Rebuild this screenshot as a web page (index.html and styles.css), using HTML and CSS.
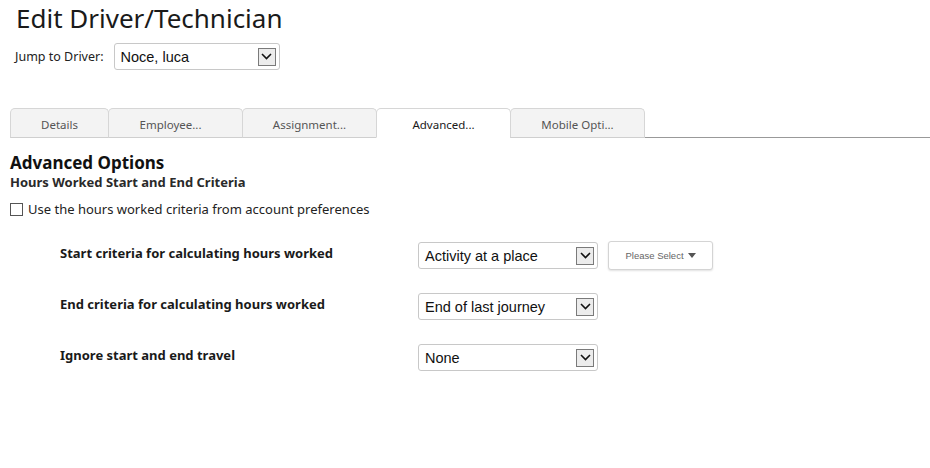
FILE: index.html
```html
<!DOCTYPE html>
<html>
<head>
<meta charset="utf-8">
<link rel="stylesheet" href="styles.css">
</head>
<body>
<h1 class="title">Edit Driver/Technician</h1>
<div class="jump">
  <span class="jump-label">Jump to Driver:</span>
  <div class="select select-jump"><span class="select-text">Noce, luca</span><span class="arrow"><svg width="11" height="7" viewBox="0 0 11 7"><path d="M1 1 L5.5 5.5 L10 1" fill="none" stroke="#111" stroke-width="1.6"/></svg></span></div>
</div>
<div class="tabs">
  <div class="tab">Details</div>
  <div class="tab tab-emp">Employee...</div>
  <div class="tab">Assignment...</div>
  <div class="tab active">Advanced...</div>
  <div class="tab">Mobile Opti...</div>
  <div class="tab-rest"></div>
</div>
<h2 class="section">Advanced Options</h2>
<h3 class="subsection">Hours Worked Start and End Criteria</h3>
<label class="check"><span class="box"></span>Use the hours worked criteria from account preferences</label>
<div class="rows">
  <div class="row">
    <span class="row-label">Start criteria for calculating hours worked</span>
    <div class="select select-row"><span class="select-text">Activity at a place</span><span class="arrow"><svg width="11" height="7" viewBox="0 0 11 7"><path d="M1 1 L5.5 5.5 L10 1" fill="none" stroke="#111" stroke-width="1.6"/></svg></span></div>
    <div class="btn">Please Select <span class="caret"></span></div>
  </div>
  <div class="row">
    <span class="row-label">End criteria for calculating hours worked</span>
    <div class="select select-row"><span class="select-text">End of last journey</span><span class="arrow"><svg width="11" height="7" viewBox="0 0 11 7"><path d="M1 1 L5.5 5.5 L10 1" fill="none" stroke="#111" stroke-width="1.6"/></svg></span></div>
  </div>
  <div class="row">
    <span class="row-label">Ignore start and end travel</span>
    <div class="select select-row"><span class="select-text">None</span><span class="arrow"><svg width="11" height="7" viewBox="0 0 11 7"><path d="M1 1 L5.5 5.5 L10 1" fill="none" stroke="#111" stroke-width="1.6"/></svg></span></div>
  </div>
</div>
</body>
</html>
```
FILE: styles.css
```css
* { box-sizing: border-box; }
body {
  margin: 0;
  padding: 0 0 0 10px;
  font-family: "Noto Sans", "Open Sans", sans-serif;
  color: #222;
  background: #fff;
}
.title {
  margin: 0 0 0 6px;
  font-size: 26px;
  font-weight: 400;
  line-height: normal;
  color: #1a1a1a;
}
.jump {
  display: flex;
  align-items: center;
  margin: 7px 0 0 5px;
  height: 27px;
}
.jump-label {
  font-size: 12.5px;
  margin-right: 10px;
  color: #222;
}
.select {
  display: flex;
  align-items: center;
  justify-content: space-between;
  border: 1px solid #c8c8c8;
  border-radius: 3px;
  height: 27px;
  padding: 0 3px 0 6px;
  font-family: "Liberation Sans", Arial, sans-serif;
  font-size: 14.5px;
  color: #111;
  background: #fff;
}
.select-jump { width: 166px; }
.select-row { width: 180px; }
.arrow {
  display: flex;
  align-items: center;
  justify-content: center;
  width: 18px;
  height: 18px;
  border: 1px solid #7a7a7a;
  background: #ececec;
}
.tabs {
  display: flex;
  margin-top: 38px;
  height: 30px;
  align-items: flex-end;
}
.tab {
  height: 30px;
  width: 135px;
  border: 1px solid #d6d6d6;
  border-bottom: 1px solid #cfcfcf;
  border-radius: 5px 5px 0 0;
  background: #f3f3f3;
  font-size: 11.5px;
  color: #555;
  display: flex;
  align-items: center;
  justify-content: center;
  padding-top: 2px;
  margin-right: -1px;
}
.tab:first-child { width: 99px; }
.tab-emp { padding-right: 10px; }
.tab.active {
  background: #fff;
  color: #1a1a1a;
  border-bottom-color: #fff;
}
.tab-rest {
  flex: 1;
  border-bottom: 1px solid #999;
  margin-left: 1px;
}
.section {
  margin: 15px 0 0 0;
  font-size: 17px;
  font-weight: 700;
  line-height: 20px;
  color: #111;
}
.subsection {
  margin: 1px 0 0 0;
  font-size: 13px;
  font-weight: 700;
  line-height: 17px;
  color: #2a2a2a;
}
.check {
  display: flex;
  align-items: center;
  margin-top: 9px;
  font-size: 13px;
  color: #222;
  line-height: 18px;
}
.box {
  width: 13px;
  height: 13px;
  border: 1px solid #555;
  margin-right: 5px;
  background: #fff;
}
.rows {
  margin: 24px 0 0 50px;
  display: flex;
  flex-direction: column;
  gap: 24px;
}
.row {
  display: flex;
  align-items: center;
  height: 27px;
}
.row-label {
  width: 358px;
  font-size: 13px;
  font-weight: 700;
  color: #1a1a1a;
  margin-top: -5px;
}
.btn {
  margin-left: 10px;
  width: 105px;
  height: 29px;
  border: 1px solid #d4d4d4;
  border-radius: 3px;
  box-shadow: 0 1px 2px rgba(0,0,0,0.12);
  display: flex;
  align-items: center;
  justify-content: center;
  font-family: "Liberation Sans", Arial, sans-serif;
  font-size: 9.5px;
  color: #666;
  background: #fff;
}
.caret {
  display: inline-block;
  margin-left: 4px;
  width: 0;
  height: 0;
  border-left: 4.5px solid transparent;
  border-right: 4.5px solid transparent;
  border-top: 5px solid #555;
}
```
